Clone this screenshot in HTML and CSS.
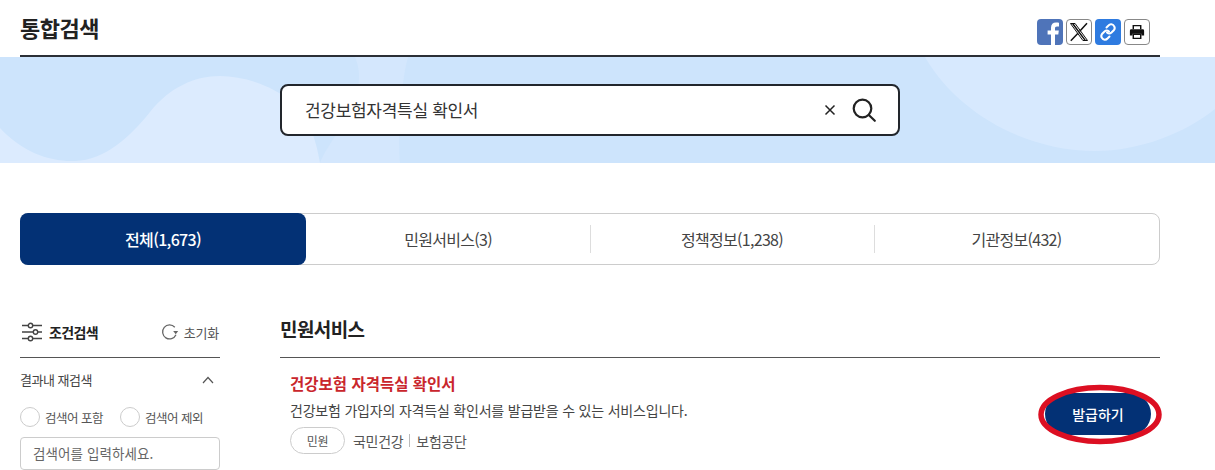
FILE: index.html
```html
<!DOCTYPE html>
<html lang="ko">

<head>
    <title>통합검색</title>
    <link rel="stylesheet" href="styles.css">
</head>

<body>
    <div class="head-row">
        <h1 class="page-title">통합검색</h1>
        <div class="share">
            <a class="share-btn share-fb">
                <svg width="26" height="26" viewBox="0 0 26 26"><path fill="#fff" d="M14 26V15.6h-3.4v-4H14V8.8c0-3.4 2-5.2 5-5.2 1.4 0 2.6.1 3 .2v3.6h-2c-1.6 0-2 .8-2 2v2.200h3.800l-.5 4H18V26z"/></svg>
            </a>
            <a class="share-btn share-line">
                <svg width="20" height="20" viewBox="0 0 20 20"><path fill="none" stroke="#111" stroke-width="1" d="M1.500 1.500h4.600l12.400 17h-4.600z"/><path fill="none" stroke="#111" stroke-width="1.500" d="M3.800 1.800l12.400 16.600M18 1.200l-7.300 8M9 11.200L1.800 18.800"/></svg>
            </a>
            <a class="share-btn share-link">
                <svg width="20" height="20" viewBox="0 0 20 20" fill="none" stroke="#fff" stroke-width="2" stroke-linecap="round"><path d="M8.500 5.500l2-2a3.400 3.400 0 0 1 5.500 .5 3.400 3.400 0 0 1 0 4l-2.500 2.500a3.300 3.300 0 0 1-4.500 0"/><path d="M11.500 14.500l-2 2a3.400 3.400 0 0 1-5.500-.5 3.400 3.400 0 0 1 0-4l2.500-2.500a3.300 3.300 0 0 1 4.500 0"/></svg>
            </a>
            <a class="share-btn share-line">
                <svg width="16" height="16" viewBox="0 0 18 18"><path fill="none" stroke="#111" stroke-width="1.600" d="M4.800 6V1.800h8.400V6"/><path fill="#111" d="M2.500 6h13A1.500 1.500 0 0 1 17 7.500V13h-3v-2H4v2H1V7.500A1.500 1.500 0 0 1 2.500 6z"/><path fill="none" stroke="#111" stroke-width="1.600" d="M4.800 11.500h8.400v4.700H4.800z"/></svg>
            </a>
        </div>
    </div>

    <div class="banner">
        <svg class="banner-bg" width="1215" height="106" viewBox="0 0 1215 106">
            <path fill="#dcebfe" d="M0 71C22 95 50 105 75 104 105 103 130 80 150 55 170 30 195 19 220 19 250 19 290 35 305 60 315 78 318 95 320 106H0z"/>
            <path fill="#d4e7fd" d="M355 0H408C400 30 398 80 400 106H320C330 80 372 40 355 0z"/>
            <path fill="#d7e9fe" d="M925 0C960 60 1030 94 1095 94 1140 94 1185 76 1215 52V0z"/>
        </svg>
        <div class="search-box">
            <span class="search-text">건강보험자격특실 확인서</span>
            <svg class="search-clear" width="12" height="12" viewBox="0 0 12 12"><path fill="none" stroke="#222" stroke-width="1.500" d="M1.500 1.500l9 9M10.500 1.500l-9 9"/></svg>
            <svg width="26" height="26" viewBox="0 0 26 26" fill="none" stroke="#222" stroke-width="2.200" stroke-linecap="round"><circle cx="11.500" cy="11.500" r="8.800"/><path d="M17.800 18l6 5.800"/></svg>
        </div>
    </div>

    <div class="tabs">
        <a class="tab tab-on">전체(1,673)</a>
        <a class="tab">민원서비스(3)</a>
        <a class="tab tab-line">정책정보(1,238)</a>
        <a class="tab tab-line">기관정보(432)</a>
    </div>

    <div class="content">
        <div class="side">
            <div class="side-head">
                <svg width="20" height="20" viewBox="0 0 20 20" fill="none" stroke="#444" stroke-width="1.400"><path d="M0 3.500h6M11 3.500h9M0 10h11M16 10h4M0 16.500h6M11 16.500h9"/><circle cx="8.500" cy="3.500" r="2.200"/><circle cx="13.500" cy="10" r="2.200"/><circle cx="8.500" cy="16.500" r="2.200"/></svg>
                <span class="side-title">조건검색</span>
                <svg class="reset-icon" width="18" height="18" viewBox="0 0 18 18" fill="none"><path stroke="#666" stroke-width="1.300" d="M15 11.800A7 7 0 1 1 13.800 4.200"/><path fill="#666" d="M12.200 8h5l-2.500 3.300z"/></svg>
                <span class="reset-text">초기화</span>
            </div>
            <div class="side-sub">
                <span>결과내 재검색</span>
                <svg width="12" height="8" viewBox="0 0 12 8"><path fill="none" stroke="#555" stroke-width="1.200" d="M1 7l5-5.500L11 7"/></svg>
            </div>
            <div class="radio-row">
                <label class="radio"><i class="radio-dot"></i>검색어 포함</label>
                <label class="radio"><i class="radio-dot"></i>검색어 제외</label>
            </div>
            <div class="side-input">검색어를 입력하세요.</div>
        </div>

        <div class="main">
            <h2 class="main-title">민원서비스</h2>
            <div class="item">
                <div class="item-body">
                    <div class="item-title">건강보험 자격득실 확인서</div>
                    <div class="item-desc">건강보험 가입자의 자격득실 확인서를 발급받을 수 있는 서비스입니다.</div>
                    <div class="item-meta">
                        <span class="item-tag">민원</span>
                        <span>국민건강</span><span class="item-sep"></span><span>보험공단</span>
                    </div>
                </div>
                <a class="issue-btn">발급하기
                    <svg class="issue-mark" width="128" height="66" viewBox="0 0 128 66"><ellipse cx="64" cy="33.500" rx="59" ry="27" fill="none" stroke="#dc0f22" stroke-width="5.500"/></svg>
                </a>
            </div>
        </div>
    </div>
</body>

</html>
```

FILE: styles.css
```css
body {
    margin: 0;
    height: 470px;
    overflow: hidden;
    background: #fff;
    color: #222;
    font-family: "Noto Sans CJK KR", "Noto Sans", sans-serif;
}

.head-row {
    width: 1140px;
    height: 55px;
    margin-left: 20px;
    border-bottom: 2px solid #2b2f36;
    display: flex;
    justify-content: space-between;
}

.page-title {
    margin: 10px 0 0;
    font-size: 22px;
    line-height: 34px;
    font-weight: 700;
    letter-spacing: -0.5px;
}

/* share icons */
.share {
    display: flex;
    gap: 3px;
    margin: 19px 10px 0 0;
}

.share-btn {
    width: 26px;
    height: 26px;
    box-sizing: border-box;
    border-radius: 4px;
    display: flex;
    align-items: center;
    justify-content: center;
    overflow: hidden;
}

.share-fb {
    background: #4f74b9;
}

.share-line {
    background: #fff;
    border: 1px solid #888;
}

.share-link {
    background: #2e7be0;
}

/* search banner */
.banner {
    position: relative;
    height: 106px;
    background: #cde4fc;
    display: flex;
    padding-left: 280px;
}

.banner-bg {
    position: absolute;
    left: 0;
    top: 0;
}

.search-box {
    position: relative;
    width: 620px;
    height: 52px;
    margin-top: 27px;
    box-sizing: border-box;
    padding: 0 21px 0 23px;
    background: #fff;
    border: 2px solid #22262c;
    border-radius: 8px;
    display: flex;
    align-items: center;
}

.search-text {
    flex: 1;
    padding-bottom: 2px;
    font-size: 17px;
    letter-spacing: -0.3px;
    color: #333;
}

.search-clear {
    margin-right: 15px;
}

/* tabs */
.tabs {
    width: 1140px;
    height: 52px;
    margin: 50px 0 0 20px;
    box-sizing: border-box;
    border: 1px solid #ccc;
    border-radius: 8px;
    display: grid;
    grid-template-columns: 285px 284px 284px 1fr;
    font-size: 16px;
    letter-spacing: -0.7px;
    color: #444;
}

.tab {
    display: flex;
    align-items: center;
    justify-content: center;
    position: relative;
}

.tab-on {
    margin: -1px 0 -1px -1px;
    background: #033175;
    color: #fff;
    font-weight: 500;
    border-radius: 8px;
}

.tab-line::before {
    content: "";
    position: absolute;
    left: 0;
    top: 11px;
    bottom: 11px;
    border-left: 1px solid #ddd;
}

/* below tabs */
.content {
    display: flex;
    margin: 49px 0 0 20px;
}

.side {
    width: 200px;
    margin-right: 60px;
}

.side-head {
    height: 44px;
    border-bottom: 1px solid #555;
    display: flex;
    align-items: center;
    padding: 0 1px 7px 2px;
    box-sizing: border-box;
}

.side-title {
    margin-left: 7px;
    font-size: 14px;
    font-weight: 700;
    letter-spacing: -0.6px;
    flex: 1;
}

.reset-icon {
    margin-right: 5px;
}

.reset-text {
    font-size: 13px;
    letter-spacing: -0.2px;
    color: #555;
}

.side-sub {
    display: flex;
    justify-content: space-between;
    align-items: center;
    height: 43px;
    padding-right: 6px;
    font-size: 13px;
    letter-spacing: -0.5px;
    color: #444;
}

.radio-row {
    display: flex;
    gap: 17px;
    margin-top: 6px;
    font-size: 12.500px;
    letter-spacing: -0.5px;
    color: #555;
}

.radio {
    display: flex;
    align-items: center;
    gap: 5px;
}

.radio-dot {
    width: 18px;
    height: 18px;
    border: 1px solid #ccc;
    border-radius: 50%;
    background: #fff;
}

.side-input {
    height: 33px;
    margin-top: 10px;
    padding-left: 12px;
    box-sizing: border-box;
    border: 1px solid #ccc;
    border-radius: 4px;
    font-size: 13.500px;
    letter-spacing: 0.1px;
    line-height: 31px;
    color: #666;
}

.main {
    width: 880px;
}

.main-title {
    height: 44px;
    margin: 0;
    box-sizing: border-box;
    border-bottom: 1px solid #555;
    font-size: 19px;
    line-height: 30px;
    font-weight: 700;
    letter-spacing: -0.6px;
}

.item {
    display: flex;
    justify-content: space-between;
    padding: 13px 9px 0 10px;
}

.item-title {
    font-size: 15.500px;
    line-height: 24px;
    font-weight: 700;
    color: #c9262c;
}

.item-desc {
    margin-top: 5px;
    font-size: 14px;
    line-height: 20px;
    letter-spacing: -0.2px;
    color: #444;
}

.item-meta {
    display: flex;
    align-items: center;
    margin-top: 7px;
    font-size: 14px;
    letter-spacing: -0.3px;
    color: #555;
}

.item-tag {
    width: 55px;
    height: 27px;
    box-sizing: border-box;
    margin-right: 8px;
    border: 1px solid #ccc;
    border-radius: 14px;
    font-size: 12px;
    line-height: 25px;
    text-align: center;
}

.item-sep {
    height: 13px;
    margin: 0 6px;
    border-left: 1px solid #bbb;
}

.issue-btn {
    position: relative;
    width: 106px;
    height: 42px;
    margin-top: 22px;
    background: #033175;
    border-radius: 21px;
    color: #fff;
    font-size: 14px;
    font-weight: 500;
    line-height: 42px;
    text-align: center;
}

.issue-mark {
    position: absolute;
    left: -9px;
    top: -12px;
}
```
